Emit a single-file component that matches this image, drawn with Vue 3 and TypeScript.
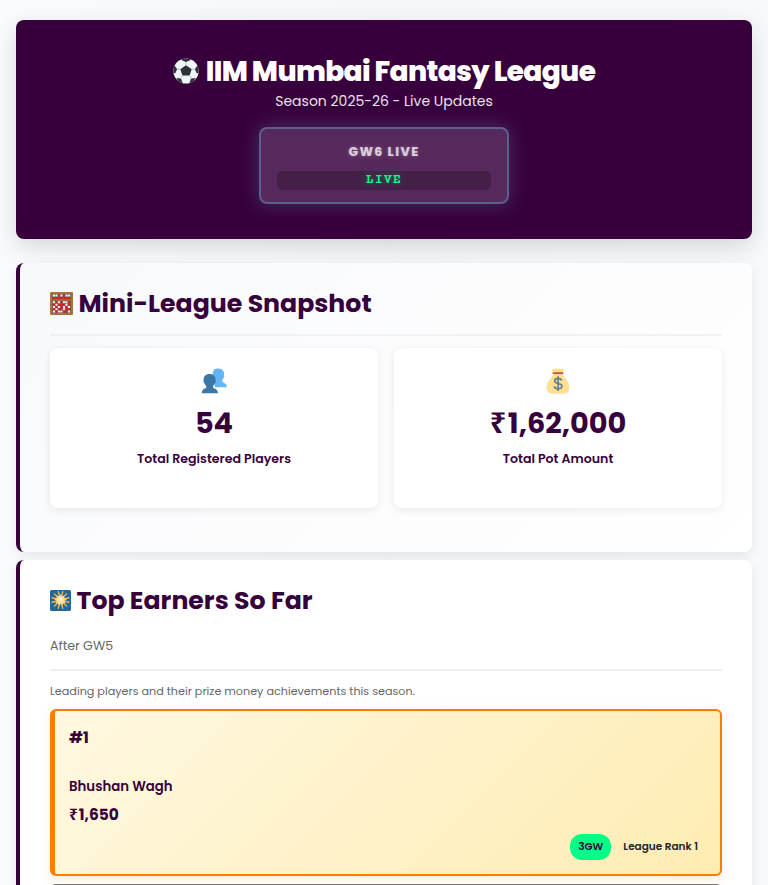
<script setup lang="ts">
interface Bead {
  x: number
  y: number
  red: boolean
}

interface Earner {
  rank: number
  name: string
  amount: string
  wins: string
  leagueRank: number
}

const beadRows: string[] = ['wwrwrww', 'rrrrrrr', 'wrwrwwr', 'rwrrrwr', 'wrwrwrw', 'rwrrwrr', 'wrwwrrw']
const beadTops: number[] = [2.6, 4.9, 9.3, 11.7, 14, 16.3, 18.6]
const beads: Bead[] = beadRows.flatMap((row, r) =>
  row.split('').map((c, i) => ({ x: 2.9 + i * 2.5, y: beadTops[r], red: c === 'r' })),
)

const rays: number[] = Array.from({ length: 12 }, (_, i) => i * 30 + 15)

const leader: Earner = { rank: 1, name: 'Bhushan Wagh', amount: '1,650', wins: '3GW', leagueRank: 1 }
</script>

<template>
  <main class="page">
    <header class="hero">
      <h1 class="hero-title">
        <svg class="ball" viewBox="0 0 26 26" aria-hidden="true">
          <defs><clipPath id="ball-clip"><circle cx="13" cy="13" r="12.6" /></clipPath></defs>
          <circle cx="13" cy="13" r="12.6" fill="#f1f5f8" />
          <g clip-path="url(#ball-clip)" fill="#2c3439">
            <path d="M13 7.2 18.7 11.2 16.6 17.6H9.4L7.3 11.2Z" />
            <path d="M8.3 0H17.7L17.2 2.2 13 4 8.8 2.2Z" />
            <path d="M0 8 1.7 7.6 4.1 11.2 2.3 15.2 0 15Z" />
            <path d="M26 8 24.3 7.6 21.9 11.2 23.7 15.2 26 15Z" />
            <path d="M3.4 20.1 8 20.6 9.7 25.2 7 26Z" />
            <path d="M22.6 20.1 18 20.6 16.3 25.2 19 26Z" />
          </g>
          <path
            d="M13 4V7.2M4.1 11.2H7.3M18.7 11.2H21.9M9.4 17.6 8 20.6M16.6 17.6 18 20.6"
            stroke="#aeb9c0"
            stroke-width=".8"
            fill="none"
          />
        </svg>
        <span class="heading-text">IIM Mumbai Fantasy League</span>
      </h1>
      <p class="hero-sub">Season 2025-26 - Live Updates</p>
      <div class="live-box">
        <div class="live-label">GW6 LIVE</div>
        <div class="live-timer">LIVE</div>
      </div>
    </header>

    <section class="panel snapshot">
      <h2 class="panel-title">
        <svg class="abacus" viewBox="0 0 23 23" aria-hidden="true">
          <rect width="23" height="23" rx=".8" fill="#a8703a" />
          <rect x="2" y="2" width="19" height="5.400" fill="#80594c" />
          <rect x="2" y="8.800" width="19" height="12.200" fill="#80594c" />
          <rect
            v-for="(b, i) in beads"
            :key="i"
            :x="b.x"
            :y="b.y"
            width="2.2"
            height="2"
            rx=".3"
            :fill="b.red ? '#d8202b' : '#eef1f4'"
          />
        </svg>
        <span class="heading-text">Mini-League Snapshot</span>
      </h2>
      <div class="stats">
        <article class="stat">
          <svg class="stat-icon" viewBox="0 0 26 26" aria-hidden="true">
            <path
              d="M13 1.6C16-.2 21.6-.1 22.8 4c.5 1.8 0 3.2.4 4.3-.4 1.4-1 2.8-2 3.8v2c1.700.9 4.200 1.100 4.700 5.100H14L11.500 6Z"
              fill="#64b5f6"
            />
            <path
              d="M8.500 5.900c4 0 6.300 2.400 6.100 6.300.6.5.3 2-.6 2.500-.3 1.400-1 2.300-1.900 3.100v2c1.700 1.100 4.600 1.300 4.900 5.500H.8c.3-4.200 2.700-4.400 4.400-5.500v-2c-.9-.8-1.600-1.700-1.900-3.100-.9-.5-1.200-2-.6-2.500-.4-4 1.900-6.300 5.800-6.300Z"
              fill="#3b78a8"
            />
          </svg>
          <div class="stat-value">54</div>
          <div class="stat-label">Total Registered Players</div>
        </article>
        <article class="stat">
          <svg class="stat-icon" viewBox="0 0 26 26" aria-hidden="true">
            <path d="M8 5 6.900.9 9.600 1.300 11.300.2 13 1.200 14.700.2 16.400 1.300 19.100.7 18 5Z" fill="#ffe082" />
            <path
              d="M8.700 5.500h8.600c.8 3.200 6.200 6.700 7 12.200.6 5-2 8-5.600 8H7.300c-3.600 0-6.200-3-5.600-8 .8-5.500 6.200-9 7-12.200Z"
              fill="#ffdf91"
            />
            <rect x="7.500" y="4.300" width="11" height="1.600" rx=".8" fill="#c65145" />
            <path
              d="M16.600 12.400c-.5-1.400-1.700-2.100-3.500-2.100-2 0-3.400 1-3.400 2.600 0 3.600 7.200 1.600 7.200 5.200 0 1.700-1.500 2.700-3.700 2.700-2.100 0-3.600-.9-4-2.500M13.100 8.200v14.700"
              fill="none"
              stroke="#6b7f88"
              stroke-width="1.700"
            />
          </svg>
          <div class="stat-value"><span class="rupee">₹</span>1,62,000</div>
          <div class="stat-label">Total Pot Amount</div>
        </article>
      </div>
    </section>

    <section class="panel earners">
      <h2 class="panel-title">
        <svg class="sparkler" viewBox="0 0 21 21" aria-hidden="true">
          <rect width="21" height="21" rx="1.600" fill="#24679b" />
          <g stroke="#edbd54" stroke-width="1.300" stroke-linecap="round">
            <line
              v-for="a in rays"
              :key="a"
              x1="10.500"
              y1="1.300"
              x2="10.500"
              y2="7"
              :transform="`rotate(${a} 10.5 10)`"
            />
          </g>
          <path
            d="M10.500 4 12 6.500 14.300 5.300 14.200 7.800 17 9 14.500 11 15.600 13.500 13 13.300 12.300 16 10.500 14 8.700 16 7.900 13.300 5.300 13.500 6.500 11 4 9 6.800 7.800 6.700 5.300 9 6.500Z"
            fill="#ffd36b"
          />
          <circle cx="10.500" cy="9.800" r="4" fill="#ffe0a0" />
          <circle cx="10.500" cy="9.200" r="1.600" fill="#fff8e4" />
        </svg>
        <span class="heading-text">Top Earners So Far</span>
      </h2>
      <p class="after">After GW5</p>
      <p class="lead">Leading players and their prize money achievements this season.</p>
      <article class="earner">
        <div class="rank">#{{ leader.rank }}</div>
        <div class="name">{{ leader.name }}</div>
        <div class="prize"><span class="rupee">₹</span>{{ leader.amount }}</div>
        <div class="meta">
          <span class="badge">{{ leader.wins }}</span>
          <span class="league-rank">League Rank {{ leader.leagueRank }}</span>
        </div>
      </article>
      <article class="earner second"></article>
    </section>
  </main>
</template>

<style>
body {
  background: #f8f9fb;
  overflow: hidden;
}
</style>

<style scoped>
* {
  box-sizing: border-box;
}

.page {
  height: 885px;
  overflow: hidden;
  padding: 20px 16px 0;
  font-family: Poppins, Inter, 'Open Sans', sans-serif;
  color: #37003c;
  background: linear-gradient(90deg, #f9fbfd, #f5f7f9 50%, #f8f9fb);
}

h1,
h2,
p {
  margin: 0;
}

.hero {
  height: 219px;
  padding-top: 33px;
  border-radius: 8px;
  background: #37003c;
  box-shadow: 0 8px 24px rgba(0, 0, 0, 0.14);
  display: flex;
  flex-direction: column;
  align-items: center;
  color: #fff;
}

.hero-title {
  display: flex;
  align-items: center;
  gap: 7px;
  height: 36px;
  font-size: 28px;
  line-height: 36px;
  font-weight: 800;
  letter-spacing: -0.66px;
  white-space: nowrap;
}

.heading-text {
  padding-top: 2px;
}

.ball {
  width: 26px;
  height: 26px;
}

.hero-sub {
  height: 24px;
  font-size: 14px;
  line-height: 24px;
  color: #e9e2ea;
}

.live-box {
  width: 250px;
  height: 77px;
  margin-top: 14px;
  padding: 14px 16px 0;
  border: 2px solid #57618c;
  border-radius: 8px;
  background: #57285b;
  box-shadow: 0 0 20px rgba(87, 97, 140, 0.5);
  text-align: center;
}

.live-label {
  height: 18px;
  font-size: 12.6px;
  line-height: 18px;
  font-weight: 800;
  letter-spacing: 1.4px;
  color: #d9cddb;
  text-shadow: 0 0 5px rgba(255, 255, 255, 0.25);
}

.live-timer {
  height: 19px;
  margin-top: 10px;
  border-radius: 6px;
  background: #441f48;
  color: #00ff87;
  font-family: 'Courier Prime', 'Liberation Mono', monospace;
  font-size: 12.6px;
  line-height: 19px;
  font-weight: 700;
  letter-spacing: 1.4px;
  text-shadow: 0 0 8px rgba(0, 255, 135, 0.4);
}

.panel {
  border-left: 4px solid #37003c;
  border-radius: 8px;
  padding: 22px 30px 0;
  box-shadow: 0 4px 12px rgba(0, 0, 0, 0.08);
}

.snapshot {
  height: 289px;
  margin-top: 24px;
  background: linear-gradient(135deg, #f8f9fb, #fff);
}

.earners {
  height: 440px;
  margin-top: 8px;
  background: #fff;
}

.panel-title {
  display: flex;
  align-items: center;
  gap: 5.5px;
  height: 36px;
  font-size: 25.2px;
  line-height: 36px;
  font-weight: 700;
  white-space: nowrap;
}

.abacus {
  width: 23px;
  height: 23px;
}

.sparkler {
  width: 21px;
  height: 21px;
}

.stats {
  display: grid;
  grid-template-columns: 1fr 1fr;
  gap: 16px;
  margin-top: 13px;
  padding-top: 12px;
  border-top: 2px solid #eff1f3;
}

.stat {
  height: 160px;
  padding-top: 20px;
  border-radius: 8px;
  background: #fff;
  box-shadow: 0 2px 8px rgba(0, 0, 0, 0.08);
  display: flex;
  flex-direction: column;
  align-items: center;
}

.stat-icon {
  width: 26px;
  height: 26px;
}

.stat-value {
  height: 40px;
  margin-top: 9px;
  font-size: 28.8px;
  line-height: 40px;
  font-weight: 700;
}

.rupee {
  font-family: 'Noto Sans', 'Open Sans', sans-serif;
  line-height: 1;
  letter-spacing: 0.06em;
}

.stat-label {
  height: 20px;
  margin-top: 6px;
  font-size: 12.6px;
  line-height: 20px;
  font-weight: 600;
}

.after {
  height: 53px;
  padding-top: 18px;
  font-size: 12.6px;
  line-height: 20px;
  color: #666;
  border-bottom: 2px solid #f0f0f2;
}

.lead {
  height: 38px;
  padding-top: 10px;
  font-size: 11.2px;
  line-height: 20px;
  color: #666;
}

.earner {
  height: 167px;
  padding: 17px 22px 0 14px;
  border: 2px solid #f77f00;
  border-left-width: 5px;
  border-radius: 6px;
  background: linear-gradient(135deg, #fff8e1, #ffecb3);
  box-shadow: 0 4px 12px rgba(247, 127, 0, 0.15);
}

.second {
  margin-top: 8px;
  border-color: #757575;
  background: #f5f5f5;
  box-shadow: none;
}

.rank {
  height: 20px;
  font-size: 15.4px;
  line-height: 20px;
  font-weight: 700;
}

.name {
  height: 20px;
  margin-top: 29px;
  font-size: 13.3px;
  line-height: 20px;
  font-weight: 600;
}

.prize {
  height: 20px;
  margin-top: 8px;
  font-size: 15.4px;
  line-height: 20px;
  font-weight: 700;
}

.meta {
  display: flex;
  justify-content: flex-end;
  align-items: center;
  gap: 12px;
  height: 26px;
  margin-top: 9px;
  font-size: 10.5px;
  font-weight: 600;
  color: #212529;
}

.badge {
  width: 41px;
  height: 26px;
  border-radius: 12px;
  background: #00ff87;
  color: #37003c;
  line-height: 26px;
  text-align: center;
}
</style>
